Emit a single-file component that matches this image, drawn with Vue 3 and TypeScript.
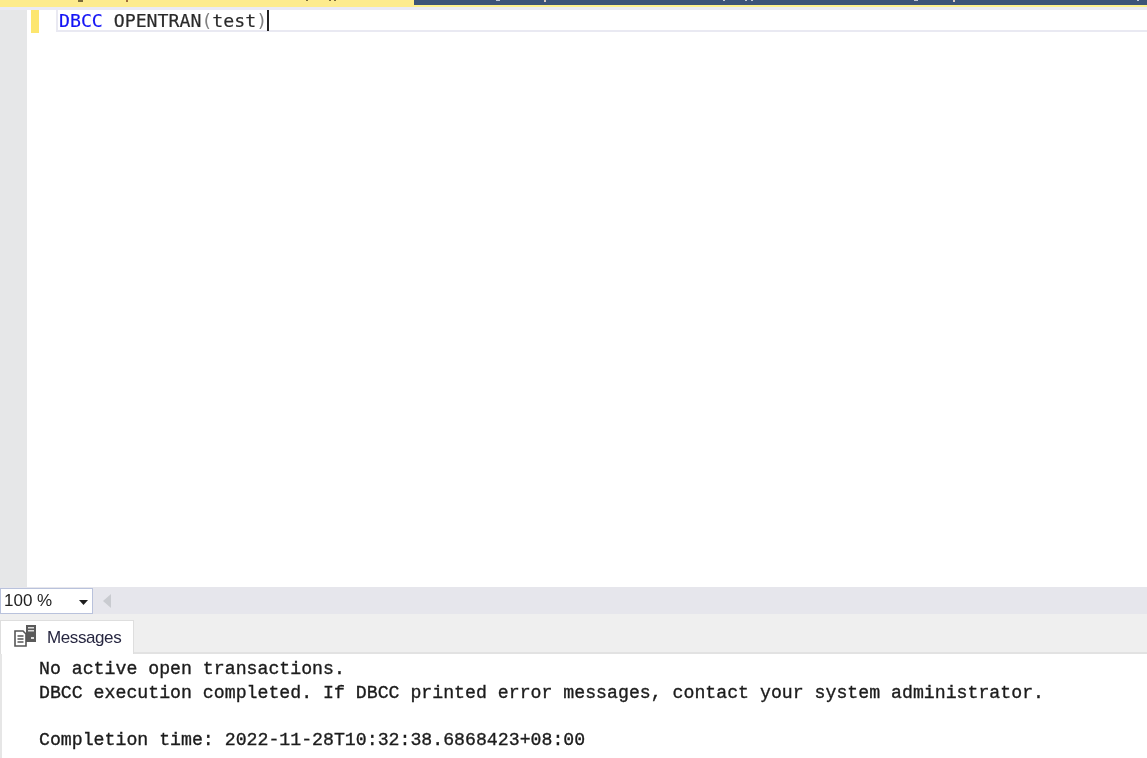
<script setup lang="ts">
const messages: string[] = [
  'No active open transactions.',
  'DBCC execution completed. If DBCC printed error messages, contact your system administrator.',
  '\u00a0',
  'Completion time: 2022-11-28T10:32:38.6868423+08:00',
]
interface Mark { x: number; w: number; h: number; color: string }
const marks: Mark[] = [
  { x: 78, w: 5, h: 2, color: '#7a6a3a' },
  { x: 126, w: 2, h: 2, color: '#a06a3a' },
  { x: 306, w: 2, h: 1, color: '#7a6a3a' },
  { x: 329, w: 2, h: 1, color: '#7a6a3a' },
  { x: 334, w: 2, h: 1, color: '#7a6a3a' },
  { x: 496, w: 4, h: 1, color: '#c0c6d4' },
  { x: 544, w: 2, h: 2, color: '#d8c8c0' },
  { x: 723, w: 2, h: 1, color: '#c0c6d4' },
  { x: 745, w: 2, h: 1, color: '#c0c6d4' },
  { x: 751, w: 2, h: 1, color: '#c0c6d4' },
  { x: 914, w: 4, h: 1, color: '#c0c6d4' },
  { x: 953, w: 2, h: 2, color: '#d8c8c0' },
  { x: 1137, w: 2, h: 1, color: '#c0c6d4' },
]
</script>

<template>
  <div class="screen">
    <div class="tabstrip">
      <div class="tab-active"></div>
      <div class="tab-rest"><div class="tab-dark"></div></div>
      <i v-for="m in marks" :key="m.x" class="mark" :style="{ left: m.x + 'px', width: m.w + 'px', height: m.h + 'px', background: m.color }"></i>
    </div>
    <div class="editor">
      <div class="gutter"></div>
      <div class="margin"><div class="change-mark"></div></div>
      <div class="code-area">
        <div class="code-line">
          <span class="code-text"><span class="kw">DBCC</span> OPENTRAN<span class="paren">(</span>test<span class="paren">)</span></span><span class="caret"></span>
        </div>
      </div>
    </div>
    <div class="scrollbar">
      <div class="zoom-box">
        <span>100 %</span>
        <svg class="zoom-arrow" width="9" height="5" viewBox="0 0 9 5"><path d="M0 0h9L4.500 5z" fill="#1e1e1e" /></svg>
      </div>
      <svg class="left-arrow" width="8" height="14" viewBox="0 0 8 14"><path d="M8 0v14L0 7z" fill="#c9cbd0" /></svg>
    </div>
    <div class="tabs">
      <div class="msg-tab">
        <svg class="msg-icon" width="24" height="24" viewBox="0 0 24 24">
          <rect x="13" y="1" width="10" height="17" fill="#5a5a5a" />
          <rect x="15" y="3" width="6" height="1.5" fill="#dcdcdc" />
          <rect x="15" y="6" width="6" height="1.5" fill="#dcdcdc" />
          <rect x="18" y="13" width="3" height="2" fill="#dcdcdc" />
          <path d="M2 7h8l3 3v12H2z" fill="#fff" stroke="#555" stroke-width="1.6" />
          <path d="M4.500 12h6M4.500 15h6M4.500 18h6" stroke="#555" stroke-width="1.3" />
        </svg>
        <span>Messages</span>
      </div>
    </div>
    <div class="results">
      <div v-for="(line, i) in messages" :key="i" class="msg-line">{{ line }}</div>
    </div>
  </div>
</template>

<style>
html, body { margin: 0; background: #fff; overflow: hidden; }
</style>

<style scoped>
.screen {
  width: 1147px;
  height: 758px;
  display: flex;
  flex-direction: column;
  background: #fff;
  overflow: hidden;
}
.tabstrip {
  height: 7px;
  display: flex;
  flex: none;
  border-bottom: 3px solid #eaeaf4;
  position: relative;
}
.mark {
  position: absolute;
  top: 0;
  filter: blur(0.4px);
}
.tab-active {
  width: 414px;
  background: #fdeb8e;
}
.tab-rest {
  flex: 1;
  background: #fdf08e;
}
.tab-dark {
  height: 5px;
  background: #3c5378;
}
.editor {
  flex: 1;
  display: flex;
  min-height: 0;
}
.gutter {
  width: 27px;
  background: #e6e7e8;
  flex: none;
}
.margin {
  width: 29px;
  flex: none;
  position: relative;
}
.change-mark {
  width: 8px;
  height: 23px;
  margin-left: 4px;
  background: #fde66e;
}
.code-area {
  flex: 1;
  min-width: 0;
}
.code-line {
  height: 20px;
  padding-left: 1px;
  border-bottom: 2px solid #e9e9f2;
  border-left: 2px solid #e9e9f2;
  display: flex;
  align-items: center;
  font-family: "DejaVu Sans Mono", monospace;
  font-size: 18.2px;
  color: #2a2a2a;
  -webkit-text-stroke: 0.2px #2a2a2a;
  white-space: pre;
  filter: blur(0.35px);
}
.kw { color: #1414f5; -webkit-text-stroke: 0.2px #1414f5; }
.paren { color: #808080; -webkit-text-stroke: 0; }
.caret {
  width: 2px;
  height: 21px;
  background: #222;
  margin-left: 0;
}
.scrollbar {
  height: 27px;
  flex: none;
  display: flex;
  align-items: center;
  background: #e6e6ec;
}
.zoom-box {
  width: 93px;
  height: 26px;
  border: 1px solid #b9c2dc;
  background: #fff;
  display: flex;
  align-items: center;
  justify-content: space-between;
  padding: 0 3px;
  box-sizing: border-box;
  font-family: "Liberation Sans", Arial, sans-serif;
  font-size: 17px;
  color: #222;
  filter: blur(0.3px);
}
.zoom-arrow { margin-right: 1px; margin-top: 3px; }
.left-arrow { margin-left: 10px; }
.tabs {
  height: 40px;
  flex: none;
  box-sizing: border-box;
  background: #efefef;
  border-bottom: 2px solid #e2e2e2;
  display: flex;
  align-items: flex-end;
}
.msg-tab {
  width: 134px;
  height: 34px;
  margin-bottom: -2px;
  box-sizing: border-box;
  background: #fff;
  border: 1px solid #dedede;
  border-bottom: none;
  display: flex;
  align-items: center;
  font-family: "Liberation Sans", Arial, sans-serif;
  font-size: 17px;
  letter-spacing: -0.4px;
  color: #262640;
  padding-left: 12px;
  gap: 10px;
  position: relative;
}
.msg-tab span { filter: blur(0.3px); }
.msg-icon { flex: none; margin-top: -4px; }
.results {
  height: 104px;
  flex: none;
  box-sizing: border-box;
  padding: 4px 0 0 39px;
  border-left: 2px solid #e6e6e6;
  font-family: "Liberation Mono", "Courier New", monospace;
  font-size: 18.22px;
  line-height: 23.5px;
  color: #1c1c1c;
  -webkit-text-stroke: 0.35px #1c1c1c;
  filter: blur(0.3px);
}
.msg-line {
  white-space: pre;
  margin-left: -2px;
  height: 23.5px;
}
</style>
